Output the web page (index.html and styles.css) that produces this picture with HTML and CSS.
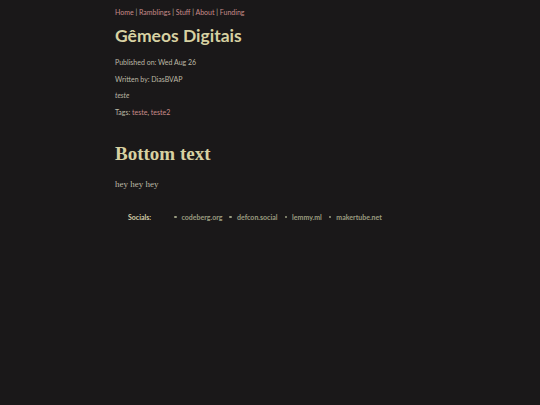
FILE: index.html
```html
<!DOCTYPE html>
<html>
<head>
<meta charset="utf-8">
<link rel="stylesheet" href="styles.css">
</head>
<body>
<div class="page">
  <nav class="nav"><a href="#">Home</a> | <a href="#">Ramblings</a> | <a href="#">Stuff</a> | <a href="#">About</a> | <a href="#">Funding</a></nav>
  <h1 class="title">Gêmeos Digitais</h1>
  <p class="meta">Published on: Wed Aug 26</p>
  <p class="meta">Written by: DiasBVAP</p>
  <p class="meta"><em>teste</em></p>
  <p class="meta">Tags: <a href="#">teste</a>, <a href="#">teste2</a></p>
  <h2 class="sub">Bottom text</h2>
  <p class="body">hey hey hey</p>
  <footer class="socials">
    <span class="label">Socials:</span>
    <ul class="links">
      <li><a href="#">codeberg.org</a></li>
      <li><a href="#">defcon.social</a></li>
      <li><a href="#">lemmy.ml</a></li>
      <li><a href="#">makertube.net</a></li>
    </ul>
  </footer>
</div>
</body>
</html>
```
FILE: styles.css
```css
html, body {
  margin: 0;
  padding: 0;
  background: #1a1819;
}
body {
  font-family: Lato, "Liberation Sans", sans-serif;
  color: #bdb8a6;
}
.page {
  width: 310px;
  margin: 0 auto;
  padding-top: 6px;
}
a {
  color: #c98c8a;
  text-decoration: none;
}
.nav {
  font-size: 7px;
  line-height: 12px;
  color: #bdb8a6;
}
.title {
  margin: 7px 0 10px;
  font-size: 17.5px;
  line-height: 22px;
  font-weight: 700;
  color: #d7d1a2;
}
.meta {
  margin: 0 0 6.7px;
  font-size: 7px;
  line-height: 10px;
}
.meta em {
  font-style: italic;
}
.sub {
  font-family: "Liberation Serif", serif;
  margin: 26px 0 13px;
  font-size: 19px;
  line-height: 22px;
  font-weight: 700;
  color: #d7d1a2;
}
.body {
  font-family: "Liberation Serif", serif;
  font-size: 9px;
  line-height: 12px;
  margin: 0 0 23px;
  color: #bdb8a6;
}
.socials {
  display: flex;
  align-items: center;
  padding-left: 13px;
  font-size: 7px;
  font-weight: 700;
}
.label {
  color: #d2cda8;
  width: 33px;
}
.links {
  display: flex;
  margin: 0;
  padding: 0 0 0 13px;
  gap: 7px;
  list-style: none;
}
.links li {
  display: flex;
  align-items: center;
  gap: 5px;
  color: #9a9c80;
}
.links li::before {
  content: "";
  width: 2.5px;
  height: 2.5px;
  border-radius: 50%;
  background: #9a9c80;
}
.links a {
  color: #9a9c80;
}
```
